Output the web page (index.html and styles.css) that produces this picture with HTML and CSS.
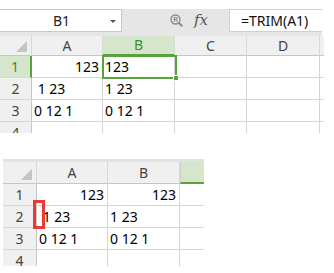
FILE: index.html
```html
<!DOCTYPE html>
<html>
<head>
<meta charset="utf-8">
<link rel="stylesheet" href="styles.css">
</head>
<body>
<div class="shot1">
  <div class="fbar">
    <div class="namebox"><span class="nb-text">B1</span><span class="nb-arrow"></span></div>
    <div class="ficons">
      <svg class="zoomicon" width="13" height="13" viewBox="0 0 13 13">
        <circle cx="5.5" cy="5.5" r="4.5" fill="none" stroke="#8a8a8a" stroke-width="1.4"/>
        <line x1="8.8" y1="8.8" x2="12.2" y2="12.2" stroke="#8a8a8a" stroke-width="2"/>
        <text x="5.5" y="7.8" font-size="6.5" text-anchor="middle" fill="#8a8a8a" font-family="Liberation Sans, sans-serif" font-weight="bold">R</text>
      </svg>
      <span class="fx">fx</span>
    </div>
    <div class="formula">=TRIM(A1)</div>
  </div>
  <div class="grid g1">
    <div class="c corner"><span class="tri"></span></div>
    <div class="c hd">A</div>
    <div class="c hd hsel">B</div>
    <div class="c hd">C</div>
    <div class="c hd">D</div>
    <div class="c hd tail"></div>

    <div class="c rh rsel">1</div>
    <div class="c r">123</div>
    <div class="c">123</div>
    <div class="c"></div>
    <div class="c"></div>
    <div class="c tail"></div>

    <div class="c rh">2</div>
    <div class="c">&nbsp;1 23</div>
    <div class="c">1 23</div>
    <div class="c"></div>
    <div class="c"></div>
    <div class="c tail"></div>

    <div class="c rh">3</div>
    <div class="c">0 12 1</div>
    <div class="c">0 12 1</div>
    <div class="c"></div>
    <div class="c"></div>
    <div class="c tail"></div>

    <div class="c rh cut">4</div>
    <div class="c cut"></div>
    <div class="c cut"></div>
    <div class="c cut"></div>
    <div class="c cut"></div>
    <div class="c tail cut"></div>

    <div class="selbox"><span class="handle"></span></div>
  </div>
</div>

<div class="shot2">
  <div class="band"></div>
  <div class="grid g2">
    <div class="c corner"><span class="tri"></span></div>
    <div class="c hd">A</div>
    <div class="c hd">B</div>
    <div class="c hd hsel2"></div>

    <div class="c rh">1</div>
    <div class="c r">123</div>
    <div class="c r">123</div>
    <div class="c"></div>

    <div class="c rh">2</div>
    <div class="c">&nbsp;1 23</div>
    <div class="c">1 23</div>
    <div class="c"></div>

    <div class="c rh">3</div>
    <div class="c">0 12 1</div>
    <div class="c">0 12 1</div>
    <div class="c"></div>

    <div class="c rh cut">4</div>
    <div class="c cut"></div>
    <div class="c cut"></div>
    <div class="c cut"></div>

    <div class="redmark"></div>
  </div>
</div>
</body>
</html>
```

FILE: styles.css
```css
* { box-sizing: border-box; }
html, body { margin: 0; padding: 0; background: #fff; }
body {
  font-family: "Noto Sans", "Liberation Sans", sans-serif;
  font-size: 14px;
  color: #000;
  width: 334px;
  height: 273px;
  overflow: hidden;
}

.shot1 { width: 322px; padding-top: 9px; }

.fbar {
  height: 27px;
  background: #e6e6e6;
  display: flex;
  align-items: flex-start;
}
.namebox {
  width: 122px;
  height: 23px;
  background: #fff;
  border: 1px solid #c8c8c8;
  border-left: none;
  position: relative;
  display: flex;
  align-items: center;
  justify-content: center;
  font-size: 14px;
  color: #222;
}
.nb-text { margin-left: 2px; }
.nb-arrow {
  position: absolute;
  right: 5px;
  top: 10px;
  width: 0; height: 0;
  border-left: 3px solid transparent;
  border-right: 3px solid transparent;
  border-top: 3px solid #555;
}
.ficons {
  width: 107px;
  height: 23px;
  display: flex;
  align-items: center;
  padding-left: 48px;
}
.zoomicon { display: block; }
.fx {
  font-family: "DejaVu Serif", "Liberation Serif", serif;
  font-style: italic;
  font-size: 15px;
  color: #555;
  margin-left: 11px;
  margin-top: -2px;
}
.formula {
  width: 93px;
  height: 23px;
  background: #fff;
  border: 1px solid #d0d0d0;
  border-right: none;
  padding-left: 11px;
  line-height: 21px;
  font-size: 14px;
  color: #111;
}

.grid { display: grid; position: relative; }
.g1 {
  grid-template-columns: 32px 71px 72px 72px 73px 2px;
  grid-template-rows: 20px 22px 22px 22px 11px;
}
.c {
  border-right: 1px solid #d4d4d4;
  border-bottom: 1px solid #d4d4d4;
  white-space: pre;
  overflow: hidden;
  padding: 0 2px;
  line-height: 21px;
  font-size: 14px;
}
.c.r { text-align: right; padding-right: 3px; }
.c.cut { border-bottom: none; }
.c.tail { border-right: none; }
.hd, .corner {
  background: #f0f0f0;
  border-right: 1px solid #d8d8d8;
  border-bottom: 1px solid #c6c6c6;
  text-align: center;
  color: #444;
  line-height: 19px;
}
.corner { position: relative; }
.tri {
  position: absolute;
  right: 4px;
  bottom: 3px;
  width: 0; height: 0;
  border-left: 11px solid transparent;
  border-bottom: 11px solid #c4c4c4;
}
.rh {
  background: #f0f0f0;
  border-right: 1px solid #c6c6c6;
  border-bottom: 1px solid #d8d8d8;
  text-align: center;
  color: #444;
}
.hsel {
  background: #d6e6cd;
  color: #3d8f26;
  border-bottom: 2px solid #5aa33a;
  line-height: 18px;
}
.rsel {
  background: #d6e6cd;
  color: #3d8f26;
  border-right: 2px solid #5aa33a;
}
.selbox {
  position: absolute;
  left: 102px;
  top: 19px;
  width: 75px;
  height: 24px;
  border: 2px solid #5aa33a;
}
.handle {
  position: absolute;
  right: -4px;
  bottom: -4px;
  width: 6px;
  height: 6px;
  background: #5aa33a;
  border: 1px solid #fff;
}

.shot2 { margin-top: 26px; padding-left: 3px; width: 204px; }
.band { height: 3px; background: #e2e2e2; }
.g2 {
  grid-template-columns: 34px 71px 72px 24px;
  grid-template-rows: 22px 22px 22px 22px 16px;
}
.g2 .hd, .g2 .corner { line-height: 21px; }
.g2 .c:nth-child(4n) { border-right: none; }
.g2 .hsel2 {
  background: #d6e6cd;
  border-bottom: 2px solid #5aa33a;
  border-left: 1px solid #d0d0d0;
}
.redmark {
  position: absolute;
  left: 30px;
  top: 38px;
  width: 12px;
  height: 29px;
  border: 3px solid #ea3a35;
}
```
